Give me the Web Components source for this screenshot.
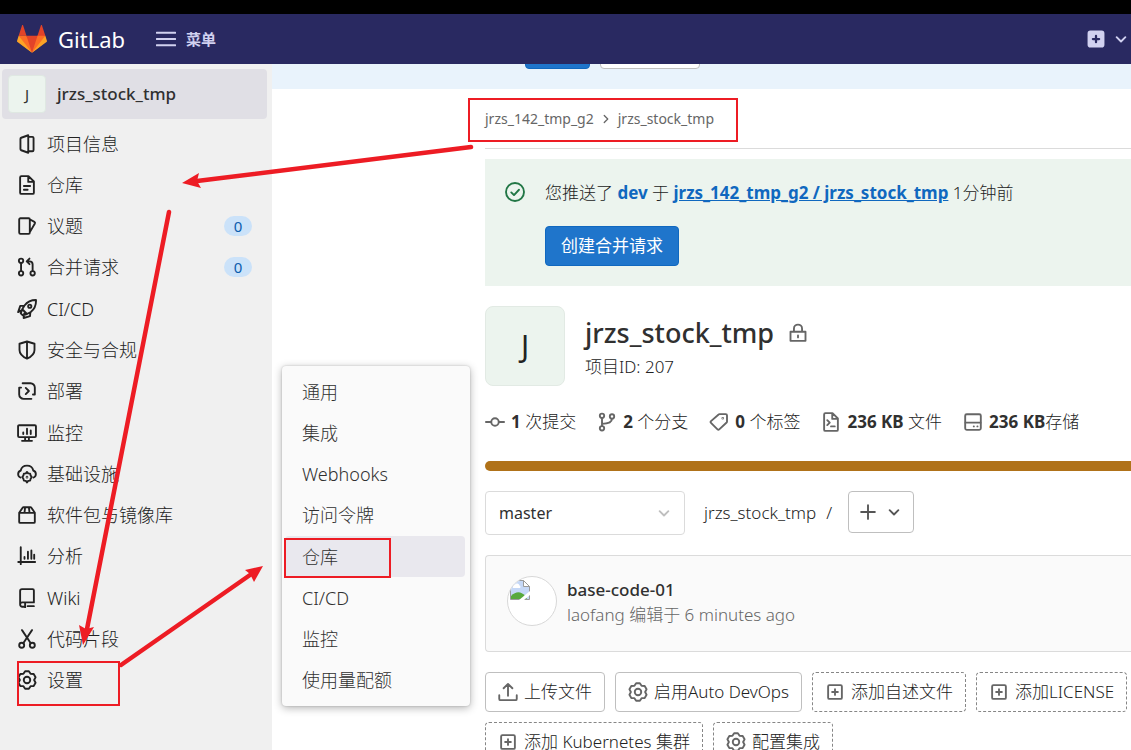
<!DOCTYPE html>
<html lang="zh-CN">
<head>
<meta charset="utf-8">
<title>jrzs_stock_tmp · GitLab</title>
<style>
html, body { height: 100%; }
body {
  margin: 0; overflow: hidden; background: #fff; color: #222;
  font: 300 17px/24px "Noto Sans", "Noto Sans CJK SC", sans-serif;
}
</style>
</head>
<body>
<gitlab-page></gitlab-page>
<script>
const ICONS = {
  project: '<path d="M9 1v14l-5.600-2a1 1 0 0 1-.650-1V4a1 1 0 0 1 .650-1ZM9.500 2.250h2.750a1 1 0 0 1 1 1v9.500a1 1 0 0 1-1 1H9.500"/>',
  doc: '<path d="M3.500.9h5.700l4.300 4.300v8.900a1 1 0 0 1-1 1h-9a1 1 0 0 1-1-1V1.900a1 1 0 0 1 1-1ZM9 1v4.500h4.500M5.500 8.750h5M5.500 11.750h3"/>',
  issues: '<path d="M2.750 1.750h6.500a1 1 0 0 1 1 1v10.500a1 1 0 0 1-1 1h-6.500a1 1 0 0 1-1-1V2.750a1 1 0 0 1 1-1ZM10.500 2.800l3.400 1.900a1 1 0 0 1 .4 1.300l-3.800 6.500"/>',
  merge: '<circle cx="3.250" cy="3" r="1.750"/><circle cx="3.250" cy="13" r="1.750"/><circle cx="12.500" cy="13" r="1.750"/><path d="M3.250 4.750v6.500M12.500 11.250V6a2.500 2.500 0 0 0-2.500-2.500H8M10 1.250 7.750 3.500 10 5.750"/>',
  rocket: '<path d="M15.200.8c.2 4-1.200 7.200-4.200 9.600L8 12 4.200 8.200 6 5.200C8.200 2.200 11.200.8 15.200.8ZM5.800 5.300 2.600 5.500.9 10.500l3.500-1.900M10.700 10.500l-.3 3.200-5.100 1.500.5-3.600M4.200 8.200 3 11.500l1.600 1.600L8 12"/><circle cx="10.200" cy="5.800" r="1.300"/>',
  shield: '<path d="M8 1.200 14 3v5c0 3.200-2.800 5.500-6 6.900C4.800 13.500 2 11.200 2 8V3ZM8 1.200v13.700"/>',
  deploy: '<path d="M4.500 1.750h6.250a3.500 3.500 0 0 1 3.500 3.500v5.500h-1.500M11.500 14.250H5.250a3.500 3.500 0 0 1-3.500-3.500v-5.500h1.500M7 5.500 9.500 8 7 10.500"/>',
  monitor: '<path d="M1.750 1.750h12.500a.9.9 0 0 1 .9.9v7.700a.9.9 0 0 1-.9.9H1.750a.9.9 0 0 1-.9-.9v-7.700a.9.9 0 0 1 .9-.9ZM6.500 11.500v2.500M9.500 11.500v2.500M4 14.250h8M5 7.500v1.250M8 4.500v4.250M11 6v2.750"/>',
  cloud: '<path d="M2.700 10.800A3 3 0 0 1 3 5.200C3.500 2.700 5.500 1.300 8 1.300s4.500 1.400 5 3.900a3 3 0 0 1 .3 5.600"/><path d="m8 6.300.9 1.200 1.600.2.400 1.500.9 1.300-.9 1.300-.4 1.500-1.600.2L8 14.800l-.9-1.300-1.600-.2-.4-1.500-.9-1.300.9-1.300.4-1.500 1.600-.2Z"/><circle cx="8" cy="10.500" r=".3"/>',
  package: '<path d="M1.750 6.250h12.500v7.250a.8.800 0 0 1-.8.800H2.550a.8.800 0 0 1-.8-.8ZM1.750 6.250 4.500 2.200a1 1 0 0 1 .8-.45h5.400a1 1 0 0 1 .8.450l2.750 4.050M6.500 1.750 6 6M9.500 1.750 10 6"/>',
  chart: '<path d="M3 1v13.500M1 12.750h13.500M6 8.750v1.500M8.750 4.500v5.750M11.500 3.500v6.750M13.750 7v3.250"/>',
  book: '<path d="M4 .9h8.500a1 1 0 0 1 1 1v9.600H4.250a1.700 1.700 0 0 0 0 3.500h1.500M2.500 13V2.400A1.500 1.500 0 0 1 4 .9M13.500 14.500H8.500M6.500 12v3.500"/>',
  scissors: '<circle cx="3.750" cy="13" r="2"/><circle cx="12.250" cy="13" r="2"/><path d="M4 .9l7 10.500M12 .9l-7 10.500"/>',
  gear: '<path d="M6.500.96h3l1.350 2.100 2.500.12 1.500 2.600L13.700 8l1.150 2.220-1.500 2.600-2.500.12-1.350 2.100h-3l-1.350-2.100-2.500-.12-1.500-2.600L2.300 8 1.150 5.780l1.500-2.600 2.500-.12Z"/><circle cx="8" cy="8" r="2.600"/>',
  menu: '<path d="M0.500 3h15M0.500 8h15M0.500 13h15"/>',
  plusfill: '<rect x="2" y="2" width="12" height="12" rx="1.500" fill="currentColor"/><path stroke="#292961" stroke-width="1.800" d="M8 5.500v5M5.500 8h5"/>',
  down: '<path d="m4.500 6.500 3.500 3.500 3.500-3.500"/>',
  right: '<path d="m6 4 4 4-4 4"/>',
  check: '<circle cx="8" cy="8" r="7.200"/><path d="m5 8.300 2.200 2.200 4-4.300"/>',
  lock: '<path d="M2 7h12v7.250H2ZM4.750 7V4.500a3.250 3.250 0 0 1 6.500 0V7M8 10v1.500"/>',
  commit: '<circle cx="8" cy="8" r="3"/><path d="M0.750 8H5M11 8h4.250"/>',
  branch: '<circle cx="4" cy="3" r="1.750"/><circle cx="4" cy="13" r="1.750"/><circle cx="12" cy="3.500" r="1.750"/><path d="M4 4.750v6.500M4 9.500c5 0 8-1 8-4.250"/>',
  tag: '<path d="M8.400 1.700h5a1 1 0 0 1 1 1v5a1 1 0 0 1-.3.700l-5.900 5.500a1 1 0 0 1-1.400 0L1.600 8.700a1 1 0 0 1 0-1.400L7.700 2a1 1 0 0 1 .7-.3Z"/><circle cx="11" cy="5" r=".3"/>',
  code: '<path d="M3.500.9h5.700l4.300 4.300v8.900a1 1 0 0 1-1 1h-9a1 1 0 0 1-1-1V1.900a1 1 0 0 1 1-1ZM9 1v4.500h4.500M5 6.500 7 8.500l-2 2M8 11.500h3"/>',
  disk: '<rect x="1.750" y="1.750" width="12.500" height="12.500" rx="1.200"/><path d="M2 8.500h12M8.600 11.500h.1M11.500 11.500h.1"/>',
  plus: '<path d="M8 2.500v11M2.500 8h11"/>',
  upload: '<path d="M8 11V1.500M4.500 5 8 1.500 11.500 5M1 10.500v3a1 1 0 0 0 1 1h12a1 1 0 0 0 1-1v-3"/>',
  addbox: '<rect x="2.500" y="2.500" width="11" height="11" rx="1"/><path d="M8 5.700v4.600M5.700 8h4.600"/>'
};

function define(name, html, init) {
  const tpl = document.createElement('template');
  tpl.innerHTML = html;
  customElements.define(name, class extends HTMLElement {
    constructor() {
      super();
      this.attachShadow({ mode: 'open' }).append(tpl.content.cloneNode(true));
    }
    connectedCallback() { if (init) init(this, this.shadowRoot); }
  });
}

/* Puts the host's icon attribute into the icon of its shadow root. */
function setIcon(el, root) {
  if (!el.hasAttribute('icon')) return;
  const icon = document.createElement('gl-icon');
  icon.setAttribute('name', el.getAttribute('icon'));
  root.querySelector('gl-icon').replaceWith(icon);
}

define('gl-icon', `<style>
:host { display: inline-flex; flex: none; width: 20px; height: 20px; }
svg { width: 100%; height: 100%; fill: none; stroke: currentColor; stroke-width: 1.5; stroke-linejoin: round; stroke-linecap: round; }
</style><svg viewBox="0 0 16 16" aria-hidden="true"></svg>`,
(el, root) => { root.querySelector('svg').innerHTML = ICONS[el.getAttribute('name')] || ''; });

define('top-bar', `<style>
:host { display: block; background: #292961; border-top: 14px solid #000; color: #d1d1f0; position: relative; z-index: 2; }
nav { display: flex; align-items: center; height: 50px; padding-left: 17px; }
a { display: flex; align-items: center; gap: 11px; color: #fff; text-decoration: none; font-size: 22px; font-weight: 400; }
svg { width: 30px; height: 30px; }
button { display: flex; align-items: center; gap: 10px; margin-left: 31px; padding: 0; border: 0; background: none; color: inherit; font: 600 15px/24px "Noto Sans", "Noto Sans CJK SC", sans-serif; }
.new { margin-left: auto; gap: 5px; }
</style>
<nav>
<a href="#"><svg viewBox="0 0 36 36" aria-hidden="true">
<path fill="#e24329" d="M2 14l9.380 9v-9l-4-12.280c-.205-.632-1.176-.632-1.380 0zM34 14l-9.380 9v-9l4-12.280c.205-.632 1.176-.632 1.380 0zM18 34.380 3 14h30z"/>
<path fill="#fc6d26" d="M18 34.380 11.380 14H2l4 11zM18 34.380 24.620 14H34l-4 11z"/>
<path fill="#fca326" d="M2 14 .1 20.160c-.18.565 0 1.200.5 1.560l17.420 12.660zM34 14l1.900 6.160c.18.565 0 1.200-.5 1.560L18 34.380z"/>
</svg>GitLab</a>
<button type="button"><gl-icon name="menu"></gl-icon>菜单</button>
<button type="button" class="new" aria-label="新建"><gl-icon name="plusfill"></gl-icon><gl-icon name="down"></gl-icon></button>
</nav>`);

define('nav-item', `<style>
:host { display: flex; }
a { flex: 1; display: flex; align-items: center; gap: 10px; padding: 0 20px 0 17px; color: #222; text-decoration: none; white-space: nowrap; }
.badge { margin-left: auto; width: 28px; border-radius: 10px; background: #cbe2f9; color: #0b5cad; font-size: 15px; font-weight: 400; line-height: 20px; text-align: center; }
.badge:empty { display: none; }
</style><a href="#"><gl-icon></gl-icon><span><slot></slot></span><span class="badge"></span></a>`,
(el, root) => {
  setIcon(el, root);
  root.querySelector('.badge').textContent = el.getAttribute('count') || '';
});

define('side-nav', `<style>
:host { display: block; width: 272px; flex: none; background: #f0f0f0; }
.context { display: flex; align-items: center; gap: 11px; box-sizing: border-box; height: 50px; margin: 5px 5px 4px 2px; padding: 0 6px; border-radius: 4px; background: #e0dfe5; color: #303030; font-weight: 500; text-decoration: none; }
.avatar { box-sizing: border-box; width: 38px; line-height: 36px; border: 1px solid #dfe8e2; border-radius: 4px; background: #ecf4ee; text-align: center; font-size: 15px; font-weight: 400; }
nav { display: grid; grid-auto-rows: 1fr; min-height: 578px; font-size: 18px; }
</style>
<a class="context" href="#"><span class="avatar">J</span>jrzs_stock_tmp</a>
<nav>
<nav-item icon="project">项目信息</nav-item>
<nav-item icon="doc">仓库</nav-item>
<nav-item icon="issues" count="0">议题</nav-item>
<nav-item icon="merge" count="0">合并请求</nav-item>
<nav-item icon="rocket">CI/CD</nav-item>
<nav-item icon="shield">安全与合规</nav-item>
<nav-item icon="deploy">部署</nav-item>
<nav-item icon="monitor">监控</nav-item>
<nav-item icon="cloud">基础设施</nav-item>
<nav-item icon="package">软件包与镜像库</nav-item>
<nav-item icon="chart">分析</nav-item>
<nav-item icon="book">Wiki</nav-item>
<nav-item icon="scissors">代码片段</nav-item>
<nav-item icon="gear">设置</nav-item>
</nav>`);

define('fly-menu', `<style>
:host { display: grid; grid-auto-rows: 1fr; box-sizing: border-box; width: 188px; min-height: 340px; padding: 5px 5px 5px 3px; border-radius: 4px; background: #fafafa; box-shadow: 0 2px 8px rgba(0,0,0,.3), 0 0 2px rgba(0,0,0,.2); font-size: 18px; }
a { display: flex; align-items: center; padding: 0 17px; border-radius: 4px; color: #303030; text-decoration: none; }
.on { background: #e9e8ee; }
</style>
<a href="#">通用</a><a href="#">集成</a><a href="#">Webhooks</a><a href="#">访问令牌</a><a href="#" class="on">仓库</a><a href="#">CI/CD</a><a href="#">监控</a><a href="#">使用量配额</a>`);

define('gl-button', `<style>
:host { display: block; }
button { box-sizing: border-box; display: flex; align-items: center; gap: 6px; height: 40px; padding: 0 12px; border: 1px solid #bfbfbf; border-radius: 4px; background: #fff; color: #222; font: inherit; white-space: nowrap; }
gl-icon { color: #666; }
:host([kind=dashed]) button { border: 1px dashed #868686; }
:host([kind=primary]) button { padding: 0 15px; border-color: #1068bf; background: #1f75cb; color: #fff; font-weight: 400; }
:host([kind=primary]) gl-icon { display: none; }
</style><button type="button"><gl-icon></gl-icon><span><slot></slot></span></button>`, setIcon);

define('notice-strip', `<style>
:host { display: flex; align-items: flex-end; gap: 10px; box-sizing: border-box; height: 25px; padding: 0 0 20px 253px; overflow: hidden; background: #e9f3fc; }
button { box-sizing: border-box; flex: none; width: 65px; height: 40px; border: 1px solid #1068bf; border-radius: 4px; background: #1f75cb; }
button + button { width: 100px; border-color: #bfbfbf; background: #fff; }
</style><button type="button" aria-label="确定"></button><button type="button" aria-label="取消"></button>`);

define('crumb-trail', `<style>
:host { display: flex; align-items: center; gap: 5px; box-sizing: border-box; height: 60px; border-bottom: 1px solid #dbdbdb; font-size: 14px; font-weight: 400; color: #666; }
a { color: inherit; text-decoration: none; }
gl-icon { width: 14px; height: 14px; }
</style><a href="#">jrzs_142_tmp_g2</a><gl-icon name="right"></gl-icon><a href="#">jrzs_stock_tmp</a>`);

define('push-alert', `<style>
:host { display: flex; gap: 20px; margin-top: 10px; padding: 20px; background: #ecf4ee; }
.ok { margin-top: 3px; color: #217645; }
p { margin: 0 0 20px; line-height: 27px; white-space: nowrap; }
a { color: #1068bf; font-weight: 700; text-decoration: none; }
a.under { text-decoration: underline; }
gl-button { width: max-content; }
</style><gl-icon class="ok" name="check"></gl-icon><div><p>您推送了 <a href="#">dev</a> 于 <a class="under" href="#">jrzs_142_tmp_g2 / jrzs_stock_tmp</a> 1分钟前</p><gl-button kind="primary">创建合并请求</gl-button></div>`);

define('project-head', `<style>
:host { display: flex; gap: 20px; margin-top: 20px; }
.avatar { box-sizing: border-box; flex: none; width: 80px; height: 80px; line-height: 78px; border: 1px solid #e2eae4; border-radius: 8px; background: #ecf4ee; text-align: center; font-size: 30px; font-weight: 400; }
h1 { display: flex; align-items: center; gap: 14px; margin: 8px 0 4px; font-size: 27px; line-height: 38px; font-weight: 500; color: #303030; }
h1 gl-icon { color: #666; }
p { margin: 0; line-height: 22px; }
</style><span class="avatar">J</span><div><h1>jrzs_stock_tmp<gl-icon name="lock"></gl-icon></h1><p>项目ID: 207</p></div>`);

define('project-stats', `<style>
:host { display: block; margin-top: 24px; }
div { display: flex; gap: 21px; white-space: nowrap; }
div a { display: flex; align-items: center; gap: 6px; color: #222; text-decoration: none; }
b { font-weight: 700; color: #303030; }
gl-icon { color: #666; }
.bar { display: block; height: 10px; margin-top: 27px; border-radius: 5px 0 0 5px; background: #b07219; }
</style><div>
<a href="#"><gl-icon name="commit"></gl-icon><span><b>1</b> 次提交</span></a>
<a href="#"><gl-icon name="branch"></gl-icon><span><b>2</b> 个分支</span></a>
<a href="#"><gl-icon name="tag"></gl-icon><span><b>0</b> 个标签</span></a>
<a href="#"><gl-icon name="code"></gl-icon><span><b>236 KB</b> 文件</span></a>
<a href="#"><gl-icon name="disk"></gl-icon><span><b>236 KB</b>存储</span></a>
</div><a class="bar" href="#" aria-label="语言"></a>`);

define('tree-controls', `<style>
:host { display: flex; align-items: flex-start; margin-top: 20px; }
label { display: grid; align-items: center; width: 200px; height: 44px; }
select, label gl-icon { grid-area: 1 / 1; }
select { appearance: none; box-sizing: border-box; width: 100%; height: 100%; padding: 0 13px; border: 1px solid #dbdbdb; border-radius: 4px; background: #fff; color: #303030; font: inherit; font-weight: 400; font-size: 16px; }
label gl-icon { justify-self: end; margin-right: 11px; color: #bfbfbf; pointer-events: none; }
.path { display: flex; gap: 10px; margin: 0 16px 0 19px; line-height: 44px; }
a { color: inherit; text-decoration: none; }
.add { box-sizing: border-box; display: flex; align-items: center; gap: 6px; width: 66px; height: 42px; padding: 0 9px; border: 1px solid #bfbfbf; border-radius: 4px; background: #fff; color: #555; }
</style><label><select aria-label="分支"><option>master</option></select><gl-icon name="down"></gl-icon></label>
<span class="path"><a href="#">jrzs_stock_tmp</a><span>/</span></span>
<button class="add" type="button" aria-label="添加"><gl-icon name="plus"></gl-icon><gl-icon name="down"></gl-icon></button>`);

define('commit-card', `<style>
:host { display: flex; align-items: flex-start; gap: 10px; box-sizing: border-box; min-height: 97px; margin-top: 20px; padding: 20px 21px; border: 1px solid #dbdbdb; border-right: 0; border-radius: 4px 0 0 4px; background: #fafafa; }
.face { box-sizing: border-box; width: 50px; height: 50px; overflow: hidden; border: 1px solid #d8d8d8; border-radius: 50%; background: #fff; }
svg { display: block; width: 20px; height: 20px; margin: 3px 0 0 2px; }
a { display: block; color: #303030; font-weight: 500; line-height: 27px; text-decoration: none; }
span { display: block; line-height: 24px; color: #666; }
</style><div class="face"><svg viewBox="0 0 20 20" role="img" aria-label="laofang"><path d="M.5.500h13l6 6v13H.500z" fill="#c5d8f7" stroke="#9a9a9a"/><path d="M13.500.5v6h6z" fill="#fff" stroke="#9a9a9a"/><path d="M3 7a2 2 0 0 1 2-2.500 2.500 2.500 0 0 1 4.500 1A1.500 1.500 0 0 1 10 8H3z" fill="#fff"/><path d="M1 19v-3c5-5 10-5 14 0l2 3z" fill="#57a93c"/><path d="m9 20 11-9v4l-6 5z" fill="#fff"/></svg></div>
<div><a href="#">base-code-01</a><span>laofang 编辑于 6 minutes ago</span></div>`);

define('quick-actions', `<style>
:host { display: flex; flex-wrap: wrap; gap: 10px; margin-top: 20px; }
</style>
<gl-button icon="upload">上传文件</gl-button>
<gl-button icon="gear">启用Auto DevOps</gl-button>
<gl-button kind="dashed" icon="addbox">添加自述文件</gl-button>
<gl-button kind="dashed" icon="addbox">添加LICENSE</gl-button>
<gl-button kind="dashed" icon="addbox">添加 Kubernetes 集群</gl-button>
<gl-button kind="dashed" icon="gear">配置集成</gl-button>`);

define('guide-marks', `<style>
:host { display: block; position: absolute; inset: 0; z-index: 5; overflow: hidden; pointer-events: none; }
svg { position: absolute; left: 0; top: 0; width: 760px; height: 720px; }
</style><svg viewBox="0 0 760 720" aria-hidden="true">
<g fill="none" stroke="#ed1c24" stroke-width="2"><rect x="469" y="99" width="268" height="42"/><rect x="285" y="539" width="105" height="38"/><rect x="18" y="662" width="101" height="43"/></g>
<g stroke="#ed1c24" stroke-width="4.500" stroke-linecap="round"><path d="M471 147 197 181M169 212 87 629M121 665 250 575"/></g>
<g fill="#ed1c24"><path d="m182 183 17-10-2 8 4 7z"/><path d="m83 645-4-20 7 4 8-2z"/><path d="m263 566-18 4 5 4 4 8z"/></g>
</svg>`);

define('gitlab-page', `<style>
:host { display: flex; flex-direction: column; position: relative; height: 100vh; overflow: hidden; }
.body { flex: 1; display: flex; min-height: 0; }
main { flex: 1; min-width: 0; overflow: hidden; }
.content { padding-left: 213px; }
fly-menu { position: absolute; left: 282px; top: 366px; z-index: 3; }
</style>
<top-bar></top-bar>
<div class="body"><side-nav></side-nav>
<main><notice-strip></notice-strip><div class="content">
<crumb-trail></crumb-trail><push-alert></push-alert><project-head></project-head><project-stats></project-stats><tree-controls></tree-controls><commit-card></commit-card><quick-actions></quick-actions>
</div></main></div>
<fly-menu></fly-menu><guide-marks></guide-marks>`);
</script>
</body>
</html>
